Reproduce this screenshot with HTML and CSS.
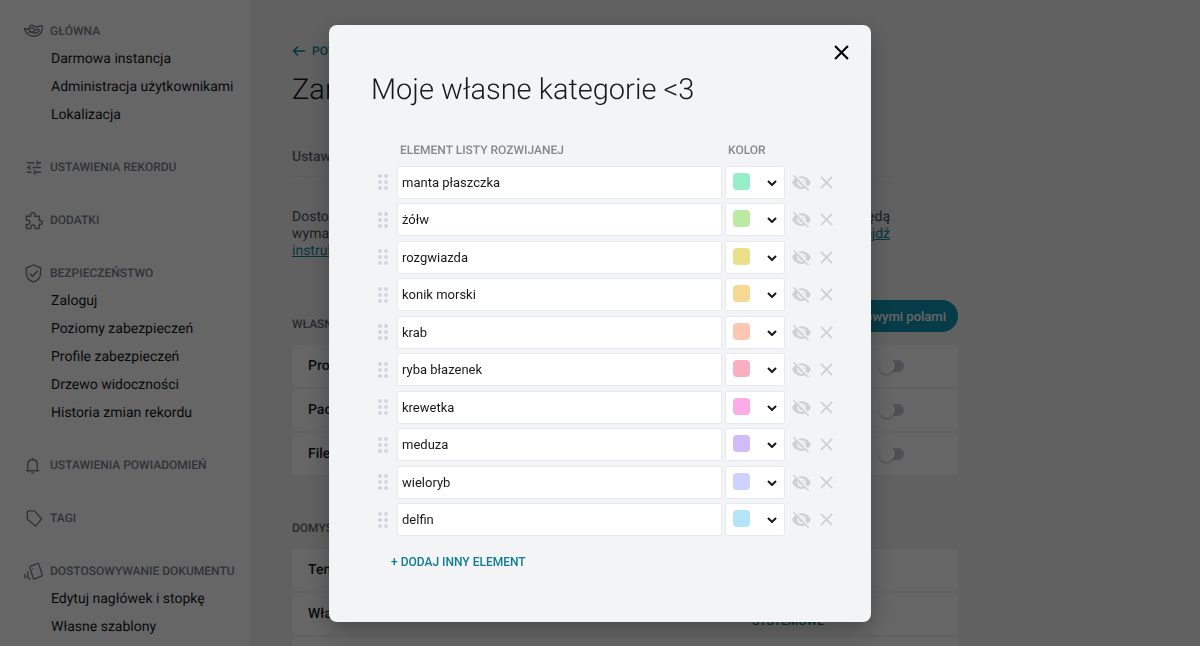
FILE: index.html
```
<!DOCTYPE html>
<html lang="pl">
<head>
    <meta charset="UTF-8">
    <meta name="viewport" content="width=device-width, initial-scale=1.0">
    <title>Moje własne kategorie</title>
    <link rel="stylesheet" href="styles.css">
</head>
<body>
    <div class="page">
        <nav class="sidebar">
            <section class="nav-group">
                <h2>
                    <svg class="icon" viewBox="0 0 20 20"><path d="M0 6.500c2 1.500 3.500 1.500 5 .5C6.500 5.500 5 3.500 8 3.500c3 0 4 2.500 6.500 1.500 1.500-.6 2.500-1.500 4-1 1.300.5 1.300 2 .8 3.500C18.200 12 15 15 10.500 15 6 15 2 12 0 6.500zM4.500 7.500c3 4.500 8.500 5.500 11 2.500 1.200-2-.8-3.500-3-1.500-2.500 2.200-5 3-7.500 2M6 7c2-1.500 4-1 5.500 1.500"/></svg>
                    Główna
                </h2>
                <a href="#">Darmowa instancja</a>
                <a href="#">Administracja użytkownikami</a>
                <a href="#">Lokalizacja</a>
            </section>
            <section class="nav-group">
                <h2>
                    <svg class="icon" viewBox="0 0 20 20"><path d="M3 5h8M14 5h4M14 2.500v5M3 10h3M6 7.500v5M9 10h9M3 15h5M11 15h7M11 12.500v5"/></svg>
                    Ustawienia rekordu
                </h2>
            </section>
            <section class="nav-group">
                <h2>
                    <svg class="icon" viewBox="0 0 20 20"><path d="M2.500 5.500H7V4a2 2 0 0 1 4.500 0v1.500H16V10h1a2 2 0 0 1 0 4.300h-1V18.500h-4.300V17a2.200 2.200 0 0 0-4.400 0v1.500H2.500v-4.300H4a2.200 2.200 0 0 0 0-4.400H2.500z"/></svg>
                    Dodatki
                </h2>
            </section>
            <section class="nav-group">
                <h2>
                    <svg class="icon" viewBox="0 0 20 20"><path d="M10 1l7.500 3v5.500c0 4.500-3 8-7.500 9.500-4.500-1.500-7.500-5-7.500-9.500V4zM6 10l3 3 5.500-6"/></svg>
                    Bezpieczeństwo
                </h2>
                <a href="#">Zaloguj</a>
                <a href="#">Poziomy zabezpieczeń</a>
                <a href="#">Profile zabezpieczeń</a>
                <a href="#">Drzewo widoczności</a>
                <a href="#">Historia zmian rekordu</a>
            </section>
            <section class="nav-group">
                <h2>
                    <svg class="icon" viewBox="0 0 20 20"><path d="M2 15.500h14M4 15.500V9c0-3 2-5 5-5s5 2 5 5v6.500M9 4V2M7.500 18h3"/></svg>
                    Ustawienia powiadomień
                </h2>
            </section>
            <section class="nav-group">
                <h2>
                    <svg class="icon" viewBox="0 0 20 20"><path d="M4.500 2H11l7.500 8.500-6.500 7.500-8.500-7.500V3z"/></svg>
                    Tagi
                </h2>
            </section>
            <section class="nav-group">
                <h2>
                    <svg class="icon" viewBox="0 0 20 20"><path d="M7 4.500l7-2.700c.8-.3 1.400 0 1.700.8l3.500 10.500c.2.800 0 1.400-.8 1.700l-7 2.900c-.8.300-1.400 0-1.700-.8l-3.500-10.700c-.2-.8 0-1.400.8-1.700zM9.500 6.500v1M4 10v6l2.500 2.500M1 12.500v3.500l1 1"/></svg>
                    Dostosowywanie dokumentu
                </h2>
                <a href="#">Edytuj nagłówek i stopkę</a>
                <a href="#">Własne szablony</a>
            </section>
        </nav>

        <main class="content">
            <a class="back" href="#">
                <svg viewBox="0 0 14 12"><path d="M13 6H1.500M6 1.500L1.500 6 6 10.500"/></svg>
                Powrót
            </a>
            <h1>Zarządzanie</h1>
            <h2 class="tab">Ustawienia pól</h2>
            <div class="intro">
                <p class="full">Dostosuj pola rekordu do swoich potrzeb. Pola obowiązkowe będą</p>
                <p class="full">wymagane przy zapisie rekordu. <a href="#">Przejdź</a></p>
                <p><a href="#">instrukcji</a></p>
            </div>

            <div class="section-head">
                <h3>Własne pola</h3>
                <button class="primary" type="button">Zarządzaj typowymi polami</button>
            </div>
            <ul class="cards">
                <li><label for="f1">Produkt</label><input class="toggle" type="checkbox" id="f1"></li>
                <li><label for="f2">Pacjent</label><input class="toggle" type="checkbox" id="f2"></li>
                <li><label for="f3">File</label><input class="toggle" type="checkbox" id="f3"></li>
            </ul>

            <h3 class="section-title">Domyślne pola</h3>
            <ul class="cards">
                <li>Temat</li>
                <li>Właściciel <span class="kind">Wymagane pole <em>systemowe</em></span></li>
                <li>Status <span class="kind">Wymagane pole <em>systemowe</em></span></li>
            </ul>
        </main>
    </div>

    <div class="overlay">
        <div class="modal" role="dialog" aria-modal="true" aria-labelledby="modalTitle">
            <button class="close" type="button" aria-label="Zamknij">
                <svg viewBox="0 0 14 14"><path d="M1 1l12 12M13 1L1 13"/></svg>
            </button>
            <h1 id="modalTitle">Moje własne kategorie &lt;3</h1>
            <div class="list-head">
                <span>Element listy rozwijanej</span>
                <span>Kolor</span>
            </div>
            <ul class="items" id="items"></ul>
            <button class="add" type="button">+ Dodaj inny element</button>
        </div>
    </div>

    <script>
        const items = [
            ['manta płaszczka', '#96efc9'],
            ['żółw', '#bbeba3'],
            ['rozgwiazda', '#ebdf89'],
            ['konik morski', '#f8d993'],
            ['krab', '#fec7b3'],
            ['ryba błazenek', '#faafc1'],
            ['krewetka', '#fdabe6'],
            ['meduza', '#d2bbfb'],
            ['wieloryb', '#cdd2fd'],
            ['delfin', '#b4e4fa']
        ];

        document.getElementById('items').innerHTML = items.map(([name, color]) => `
            <li class="item">
                <svg class="grip" viewBox="0 0 10 16">
                    <circle cx="2" cy="2" r="2"/><circle cx="8" cy="2" r="2"/>
                    <circle cx="2" cy="8" r="2"/><circle cx="8" cy="8" r="2"/>
                    <circle cx="2" cy="14" r="2"/><circle cx="8" cy="14" r="2"/>
                </svg>
                <input class="name" type="text" value="${name}" aria-label="Element listy rozwijanej">
                <div class="color">
                    <select aria-label="Kolor"><option>${color}</option></select>
                    <span class="swatch" style="background: ${color}"></span>
                    <svg class="chevron" viewBox="0 0 10 6"><path d="M1 1l4 4 4-4"/></svg>
                </div>
                <button class="tool hide" type="button" aria-label="Ukryj">
                    <svg viewBox="1 2 22 20"><path d="M12 7c2.760 0 5 2.240 5 5 0 .65-.13 1.260-.36 1.830l2.920 2.920c1.510-1.260 2.700-2.890 3.430-4.750-1.730-4.390-6-7.500-11-7.500-1.400 0-2.740.25-3.980.7l2.160 2.160C10.740 7.130 11.350 7 12 7zM2 4.270l2.280 2.280.46.46C3.080 8.300 1.780 10.020 1 12c1.730 4.390 6 7.500 11 7.500 1.550 0 3.030-.3 4.380-.84l.42.42L19.730 22 21 20.730 3.270 3 2 4.270zM7.530 9.800l1.550 1.550c-.05.21-.08.43-.08.65 0 1.660 1.340 3 3 3 .22 0 .44-.03.65-.08l1.550 1.550c-.67.33-1.410.53-2.200.53-2.760 0-5-2.240-5-5 0-.79.2-1.530.53-2.200zm4.310-.78l3.150 3.150.02-.16c0-1.660-1.340-3-3-3l-.17.01z"/></svg>
                </button>
                <button class="tool remove" type="button" aria-label="Usuń">
                    <svg viewBox="0 0 14 14"><path d="M1 1l12 12M13 1L1 13"/></svg>
                </button>
            </li>`).join('');
    </script>
</body>
</html>
```
FILE: styles.css
```
* { box-sizing: border-box; }
body { margin: 0; font-family: Roboto, "Liberation Sans", sans-serif; font-size: 14px; color: #17191c; height: 100vh; overflow: hidden; text-rendering: geometricPrecision; }
h1, h2, h3, p, ul { margin: 0; padding: 0; font-weight: 400; }
ul { list-style: none; }
button { font-family: inherit; border: none; background: none; padding: 0; cursor: pointer; }
svg { display: block; fill: none; stroke: currentColor; }
h1 { font-size: 29px; line-height: 36px; font-weight: 300; }

.page { display: flex; min-height: 100vh; background: #f2f3f4; }

/* sidebar */
.sidebar { flex: none; width: 250px; padding: 17px 0 0 24px; background: #fff; }
.nav-group { min-height: 29px; margin-bottom: 24px; }
.nav-group h2 { display: flex; align-items: center; gap: 7px; height: 28px; font-size: 12px; font-weight: 500; text-transform: uppercase; color: #7d7f8c; white-space: nowrap; }
.nav-group a { display: block; padding-left: 27px; line-height: 28px; color: #17191c; text-decoration: none; white-space: nowrap; }
.icon { flex: none; width: 19px; height: 19px; stroke-width: 1.5; }

/* page under the modal */
.content { flex: 1; max-width: 708px; padding: 43px 0 0 42px; white-space: nowrap; }
.back { display: flex; align-items: center; gap: 6px; line-height: 16px; font-size: 12px; font-weight: 500; text-transform: uppercase; color: #0f869e; text-decoration: none; }
.back svg { width: 14px; height: 12px; stroke-width: 1.5; }
.content h1 { margin-top: 13px; }
.tab { width: 600px; margin-top: 40px; padding-bottom: 10px; line-height: 18px; font-size: 14px; font-weight: 500; color: #666a70; border-bottom: 1px solid #e6e8ea; }
.intro { width: 598px; margin-top: 32px; line-height: 17px; color: #4b4e54; }
.intro a { color: #0f869e; }
.intro .full { text-align: justify; text-align-last: justify; }
.section-head { display: flex; align-items: flex-end; justify-content: space-between; margin-top: 40px; }
.content h3 { font-size: 12px; font-weight: 500; text-transform: uppercase; color: #666a70; line-height: 16px; }
.primary { height: 32px; padding: 0 12px; border-radius: 16px; background: #0f96b1; color: #fff; font-size: 13px; font-weight: 500; }
.cards { display: grid; gap: 2px; margin-top: 13px; }
.cards li { display: flex; align-items: center; justify-content: space-between; height: 42px; padding: 0 16px; font-weight: 500; background: #fff; border-radius: 4px; }
.content .section-title { margin-top: 45px; }
.toggle { appearance: none; position: relative; width: 18px; height: 12px; margin: 0 38px 0 0; border-radius: 6px; background: #c9cbd2; }
.toggle::before { content: ""; position: absolute; left: -7px; top: -2px; width: 16px; height: 16px; border-radius: 50%; background: #fff; box-shadow: 0 1px 2px rgba(0, 0, 0, .3); }
.kind { width: 190px; line-height: 14px; font-size: 12px; text-transform: uppercase; }
.kind em { display: block; font-style: normal; color: #0f867c; }

/* modal */
.overlay { position: fixed; inset: 0; display: flex; align-items: center; justify-content: center; background: rgba(0, 0, 0, .6); }
.modal { position: relative; width: 542px; padding: 47px 32px 52px 42px; border-radius: 8px; background: #f3f4f6; box-shadow: 0 8px 24px rgba(0, 0, 0, .3); }
.close { position: absolute; top: 20px; right: 22px; }
.close svg { width: 15px; height: 15px; stroke-width: 2; }
.list-head { display: flex; margin-top: 34px; padding-left: 29px; line-height: 16px; font-size: 12px; font-weight: 500; text-transform: uppercase; color: #86888c; }
.list-head span:first-child { width: 328px; }
.items { display: grid; grid-template-rows: repeat(10, 1fr); min-height: 375px; margin-top: 8px; }
.item { display: flex; align-items: center; align-self: start; padding-left: 7px; }
.grip { width: 10px; height: 16px; margin-right: 9px; fill: #d3d6dd; stroke: none; }
.name { flex: none; width: 325px; height: 33px; padding: 0 4px; border: 1px solid #e8e9ec; border-radius: 2px; background: #fff; font-family: inherit; font-size: 13px; color: #17191c; }
.color { position: relative; width: 60px; height: 33px; margin: 0 7px 0 3px; }
.color select { appearance: none; width: 100%; height: 100%; border: 1px solid #e8e9ec; border-radius: 2px; background: #fff; color: transparent; }
.swatch { position: absolute; left: 8px; top: 7px; width: 17px; height: 17px; border-radius: 4px; pointer-events: none; }
.chevron { position: absolute; right: 8px; top: 14px; width: 10px; height: 6px; stroke-width: 2; pointer-events: none; }
.tool { color: #d0d1d3; }
.hide svg { width: 19px; height: 17px; fill: currentColor; stroke: none; }
.remove { margin-left: 9px; }
.remove svg { width: 13px; height: 13px; stroke-width: 2; }
.add { display: block; margin: 13px 0 0 20px; line-height: 16px; font-size: 12px; font-weight: 500; text-transform: uppercase; color: #0f7c92; }
```
